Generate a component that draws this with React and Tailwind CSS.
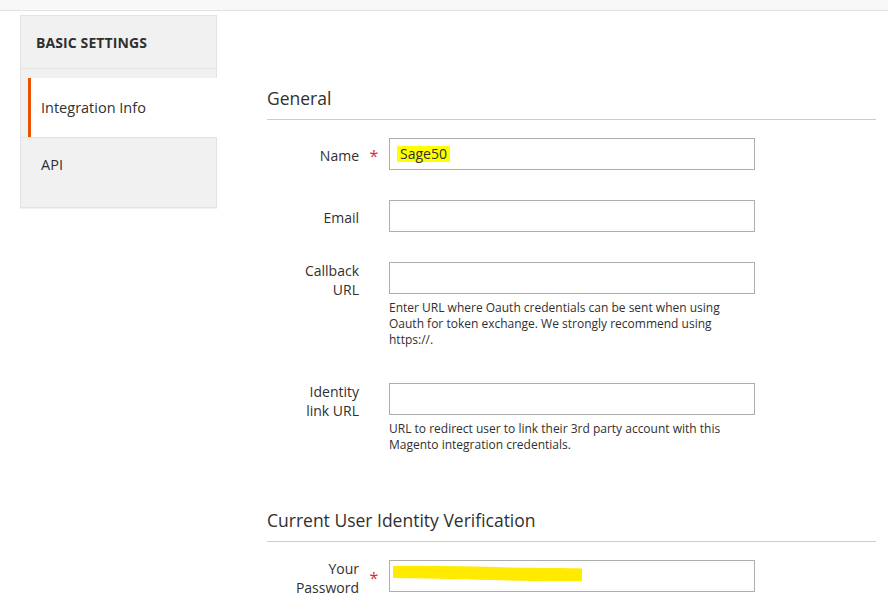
export default function App() {
  return (
    <div className="min-h-screen bg-white font-['Open_Sans',sans-serif] text-[#303030]">
      <div className="h-[11px] bg-[#f8f8f8] border-b border-[#e3e3e3]" />
      <div className="flex pl-[20px] pt-[4px]">
        <Sidebar />
        <main className="ml-[50px] w-[609px]">
          <SectionTitle className="mt-[71px]">General</SectionTitle>

          <Field label="Name" required className="mt-[18px]">
            <div className="flex items-center pl-[7px] h-full">
              <span className="bg-[#ffff00] px-[3px] text-[14px] leading-[16px]">Sage50</span>
            </div>
          </Field>

          <Field label="Email" className="mt-[30px]" />

          <Field
            label={
              <>
                Callback
                <br />
                URL
              </>
            }
            className="mt-[30px]"
            note="Enter URL where Oauth credentials can be sent when using Oauth for token exchange. We strongly recommend using https://."
          />

          <Field
            label={
              <>
                Identity
                <br />
                link URL
              </>
            }
            className="mt-[35px]"
            note="URL to redirect user to link their 3rd party account with this Magento integration credentials."
          />

          <SectionTitle className="mt-[55px]">Current User Identity Verification</SectionTitle>

          <Field
            label={
              <>
                Your
                <br />
                Password
              </>
            }
            required
            className="mt-[18px]"
          >
            <div className="pl-[2px] pt-[4px]">
              <svg width="192" height="18" viewBox="0 0 192 18">
                <path
                  d="M1 1 C40 0.5 80 1.5 120 2.5 C150 3 175 3 190 3.5 L190 16 C160 16.5 130 16 100 15 C60 14 30 13.5 1 13 Z"
                  fill="#ffea00"
                />
              </svg>
            </div>
          </Field>
        </main>
      </div>
    </div>
  );
}

function Sidebar() {
  return (
    <aside className="w-[197px] shrink-0">
      <div className="h-[54px] bg-[#f1f1f1] border border-[#e3e3e3] flex items-center pl-[15px] text-[14px] font-bold tracking-[0.1px]">
        BASIC SETTINGS
      </div>
      <div className="h-[9px] bg-[#f1f1f1] border-x border-[#e3e3e3]" />
      <div className="bg-[#f1f1f1] border-l border-[#e3e3e3] pl-[7px]">
        <div className="h-[59px] bg-white border-l-[3px] border-[#eb5202] flex items-center pl-[10px] text-[14.5px]">
          Integration Info
        </div>
      </div>
      <div className="h-[71px] bg-[#f1f1f1] border border-[#e3e3e3] pl-[20px] pt-[16px] text-[14.5px] shadow-[0_1px_1px_rgba(0,0,0,0.05)]">
        API
      </div>
    </aside>
  );
}

function SectionTitle({ children, className = "" }) {
  return (
    <div className={`border-b border-[#cccccc] pb-[9px] ${className}`}>
      <h2 className="text-[17.5px] leading-[24px]">{children}</h2>
    </div>
  );
}

function Field({ label, required = false, note, className = "", children }) {
  return (
    <div className={className}>
      <div className="flex items-center h-[32px]">
        <label className="w-[92px] shrink-0 text-right text-[14px] leading-[19px] mt-[3px]">{label}</label>
        <div className="w-[30px] shrink-0 flex justify-center mt-[3px]">
          {required && <span className="text-[#e22626] text-[16px] leading-none">*</span>}
        </div>
        <div className="w-[366px] h-[32px] border border-[#adadad] bg-white">{children}</div>
      </div>
      {note && (
        <p className="ml-[122px] w-[366px] mt-[6px] text-[12px] leading-[16px] text-[#303030]">{note}</p>
      )}
    </div>
  );
}
